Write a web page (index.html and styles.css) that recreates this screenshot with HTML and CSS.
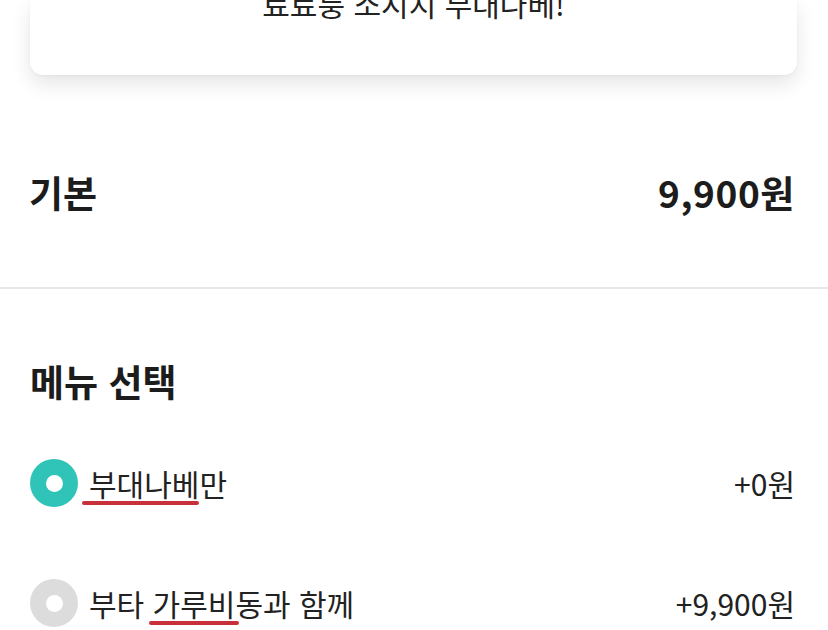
FILE: index.html
```html
<!DOCTYPE html>
<html lang="ko">
<head>
<meta charset="utf-8">
<link rel="stylesheet" href="styles.css">
</head>
<body>
<div class="page">
  <div class="card-wrap">
    <div class="card">
      <p class="card-title">료료룽 소시지 부대나베!</p>
    </div>
  </div>
  <section class="base">
    <span class="base-label">기본</span>
    <span class="base-price">9,900원</span>
  </section>
  <hr class="divider">
  <section class="menu">
    <h2 class="menu-title">메뉴 선택</h2>
    <div class="options">
      <div class="option">
        <span class="radio radio-on"></span>
        <span class="opt-name"><span class="mark mark-1">부대나베</span>만</span>
        <span class="opt-price">+0원</span>
      </div>
      <div class="option">
        <span class="radio radio-off"></span>
        <span class="opt-name">부타 <span class="mark mark-2">가루비</span>동과 함께</span>
        <span class="opt-price">+9,900원</span>
      </div>
    </div>
  </section>
</div>
</body>
</html>
```

FILE: styles.css
```css
* { box-sizing: border-box; }
html, body {
  margin: 0;
  padding: 0;
  background: #ffffff;
}
body {
  font-family: "Noto Sans CJK KR", "Noto Sans", sans-serif;
  color: #1e1e1e;
  width: 828px;
  height: 630px;
  overflow: hidden;
}
.page {
  display: flex;
  flex-direction: column;
}
.card-wrap {
  padding: 0 31px 0 30px;
}
.card {
  height: 75px;
  background: #fff;
  border-radius: 0 0 13px 13px;
  box-shadow: 0 9px 20px rgba(0, 0, 0, 0.1), 0 1px 3px rgba(0, 0, 0, 0.04);
  overflow: hidden;
  display: flex;
  justify-content: center;
  align-items: flex-start;
}
.card-title {
  margin: -17px 0 0 0;
  font-size: 30px;
  line-height: 40px;
  font-weight: 400;
  color: #222;
}
.base {
  display: flex;
  justify-content: space-between;
  align-items: center;
  padding: 93px 33px 71px 29px;
  font-size: 37px;
  line-height: 48px;
  font-weight: 700;
  color: #1c1c1c;
}
.base-price {
  letter-spacing: 0.6px;
}
.divider {
  margin: 0;
  border: 0;
  height: 2px;
  background: #e8e8e8;
}
.menu {
  padding: 68px 33px 0 30px;
}
.menu-title {
  margin: 0;
  font-size: 37px;
  line-height: 48px;
  font-weight: 700;
  color: #1c1c1c;
}
.options {
  display: flex;
  flex-direction: column;
  gap: 48px;
  margin-top: 42px;
}
.option {
  display: flex;
  align-items: center;
  height: 72px;
  font-size: 30px;
  color: #222;
}
.radio {
  width: 48px;
  height: 48px;
  border-radius: 50%;
  flex: none;
  position: relative;
  margin-right: 11px;
}
.radio::after {
  content: "";
  position: absolute;
  left: 50%;
  top: 50%;
  width: 17px;
  height: 17px;
  margin: -8.5px 0 0 -8.5px;
  border-radius: 50%;
  background: #fff;
}
.radio-on { background: #2fc4b7; }
.radio-off { background: #dcdcdc; }
.opt-name {
  flex: 1;
  line-height: 40px;
}
.opt-price {
  line-height: 40px;
}
.mark {
  position: relative;
}
.mark::after {
  content: "";
  position: absolute;
  left: -7px;
  right: 0;
  bottom: 0;
  height: 4px;
  border-radius: 2px;
  background: #c8303a;
}
.mark-2::after {
  left: -4px;
  right: -4px;
}
```
